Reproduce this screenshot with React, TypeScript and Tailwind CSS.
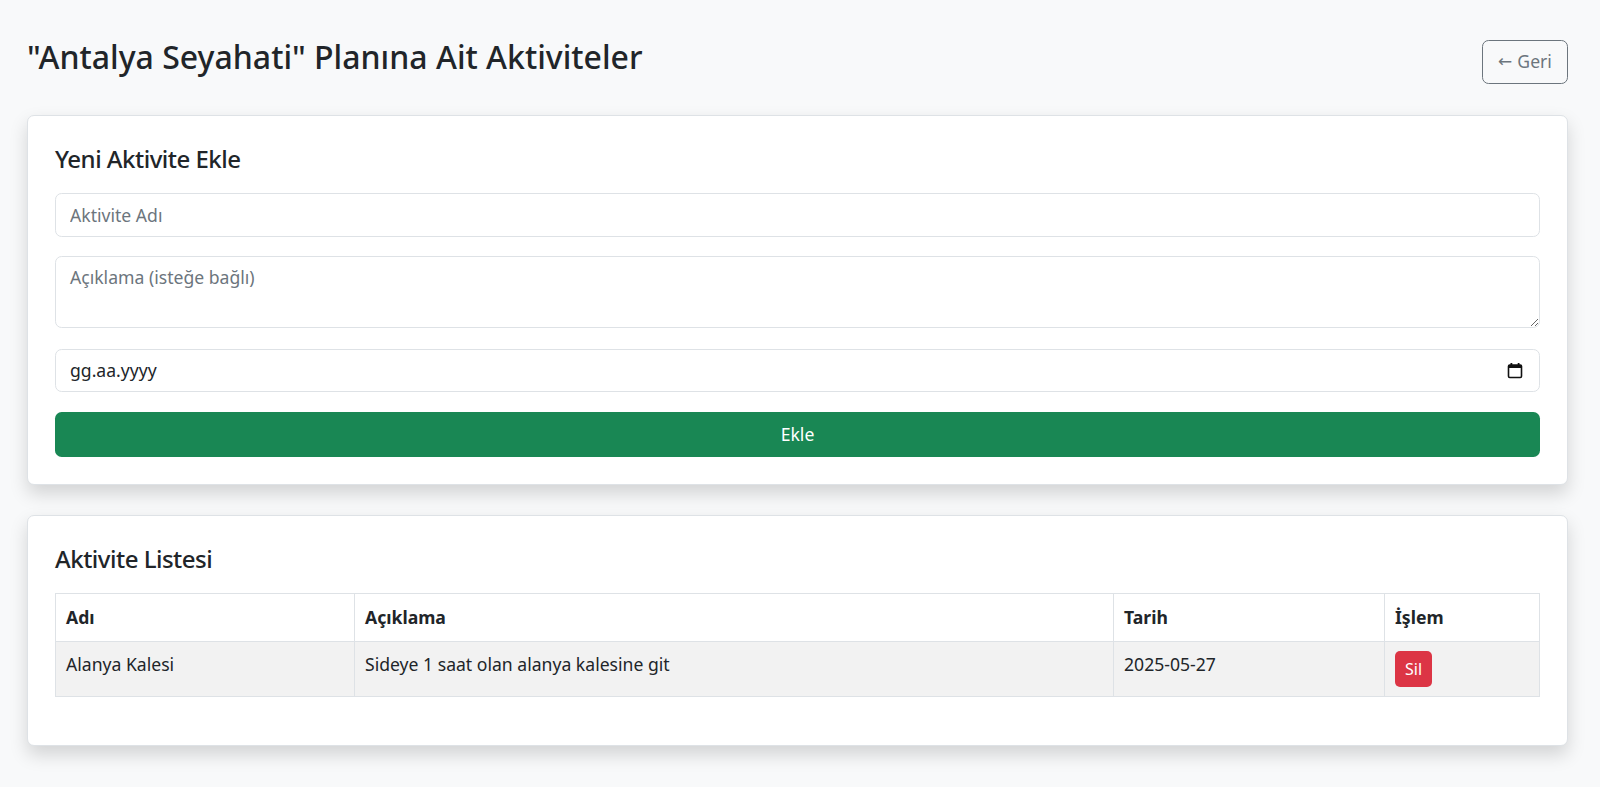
import React from "react";

const font = { fontFamily: '"Noto Sans", "Open Sans", sans-serif' };

function CalendarIcon() {
  return (
    <svg width="16" height="17" viewBox="0 0 16 17" fill="none">
      <rect x="1.5" y="3" width="13" height="12.5" rx="1.2" stroke="#111" strokeWidth="1.6" />
      <rect x="1.5" y="3" width="13" height="3" fill="#111" />
      <rect x="3.5" y="1" width="1.8" height="3" fill="#111" />
      <rect x="10.7" y="1" width="1.8" height="3" fill="#111" />
    </svg>
  );
}

export default function App() {
  return (
    <div
      className="min-h-screen bg-[#f8f9fa] pl-[27px] pr-[32px] pt-[36px] pb-[40px] text-[#212529]"
      style={font}
    >
      <div className="flex items-center justify-between mb-[28px]">
        <h2 className="text-[32px] leading-[42px] font-medium mb-[9px]">
          "Antalya Seyahati" Planına Ait Aktiviteler
        </h2>
        <button className="h-[44px] w-[86px] rounded-[6.6px] border border-[#6c757d] text-[#6c757d] text-[17.6px] bg-transparent flex items-center justify-center gap-[5px]">
          <span className="text-[17px]" style={{ fontFamily: '"DejaVu Sans", sans-serif' }}>←</span>
          <span>Geri</span>
        </button>
      </div>

      <div className="bg-white border border-[#dee2e6] rounded-[7px] shadow-[0_8.8px_17.6px_rgba(0,0,0,0.15)] px-[27px] pt-[27px] pb-[27px] mb-[30px]">
        <h4 className="text-[24px] leading-[32px] font-medium mb-[18px] tracking-[-0.5px]">Yeni Aktivite Ekle</h4>
        <input
          className="block w-full h-[44px] rounded-[6.6px] border border-[#dee2e6] px-[14px] text-[17.6px] placeholder:text-[#6c757d] outline-none mb-[19px]"
          placeholder="Aktivite Adı"
        />
        <textarea
          className="block w-full h-[72px] rounded-[6.6px] border border-[#dee2e6] px-[14px] py-[7px] text-[17.6px] leading-[1.5] placeholder:text-[#6c757d] outline-none mb-[21px]"
          placeholder="Açıklama (isteğe bağlı)"
        />
        <div className="flex items-center justify-between h-[43px] rounded-[6.6px] border border-[#dee2e6] pl-[14px] pr-[16px] text-[17.6px] mb-[20px]">
          <span>gg.aa.yyyy</span>
          <CalendarIcon />
        </div>
        <button className="block w-full h-[45px] rounded-[6.6px] bg-[#198754] text-white text-[17.6px]">
          Ekle
        </button>
      </div>

      <div className="bg-white border border-[#dee2e6] rounded-[7px] shadow-[0_8.8px_17.6px_rgba(0,0,0,0.15)] px-[27px] pt-[27px] pb-[48px]">
        <h4 className="text-[24px] leading-[32px] font-medium mb-[18px] tracking-[-0.5px]">Aktivite Listesi</h4>
        <table className="w-full border-collapse text-[17.6px] leading-[1.5]">
          <thead>
            <tr className="h-[48px]">
              <th className="w-[299px] border border-[#dee2e6] px-[10px] text-left font-bold">Adı</th>
              <th className="w-[759px] border border-[#dee2e6] px-[10px] text-left font-bold">Açıklama</th>
              <th className="w-[271px] border border-[#dee2e6] px-[10px] text-left font-bold">Tarih</th>
              <th className="border border-[#dee2e6] px-[10px] text-left font-bold">İşlem</th>
            </tr>
          </thead>
          <tbody>
            <tr className="bg-[#f2f2f2]">
              <td className="border border-[#dee2e6] px-[10px] py-[9px] align-top">Alanya Kalesi</td>
              <td className="border border-[#dee2e6] px-[10px] py-[9px] align-top">Sideye 1 saat olan alanya kalesine git</td>
              <td className="border border-[#dee2e6] px-[10px] py-[9px] align-top">2025-05-27</td>
              <td className="border border-[#dee2e6] px-[10px] py-[9px] align-top">
                <button className="h-[36px] w-[37px] rounded-[5px] bg-[#dc3545] text-white text-[16px]">Sil</button>
              </td>
            </tr>
          </tbody>
        </table>
      </div>
    </div>
  );
}
